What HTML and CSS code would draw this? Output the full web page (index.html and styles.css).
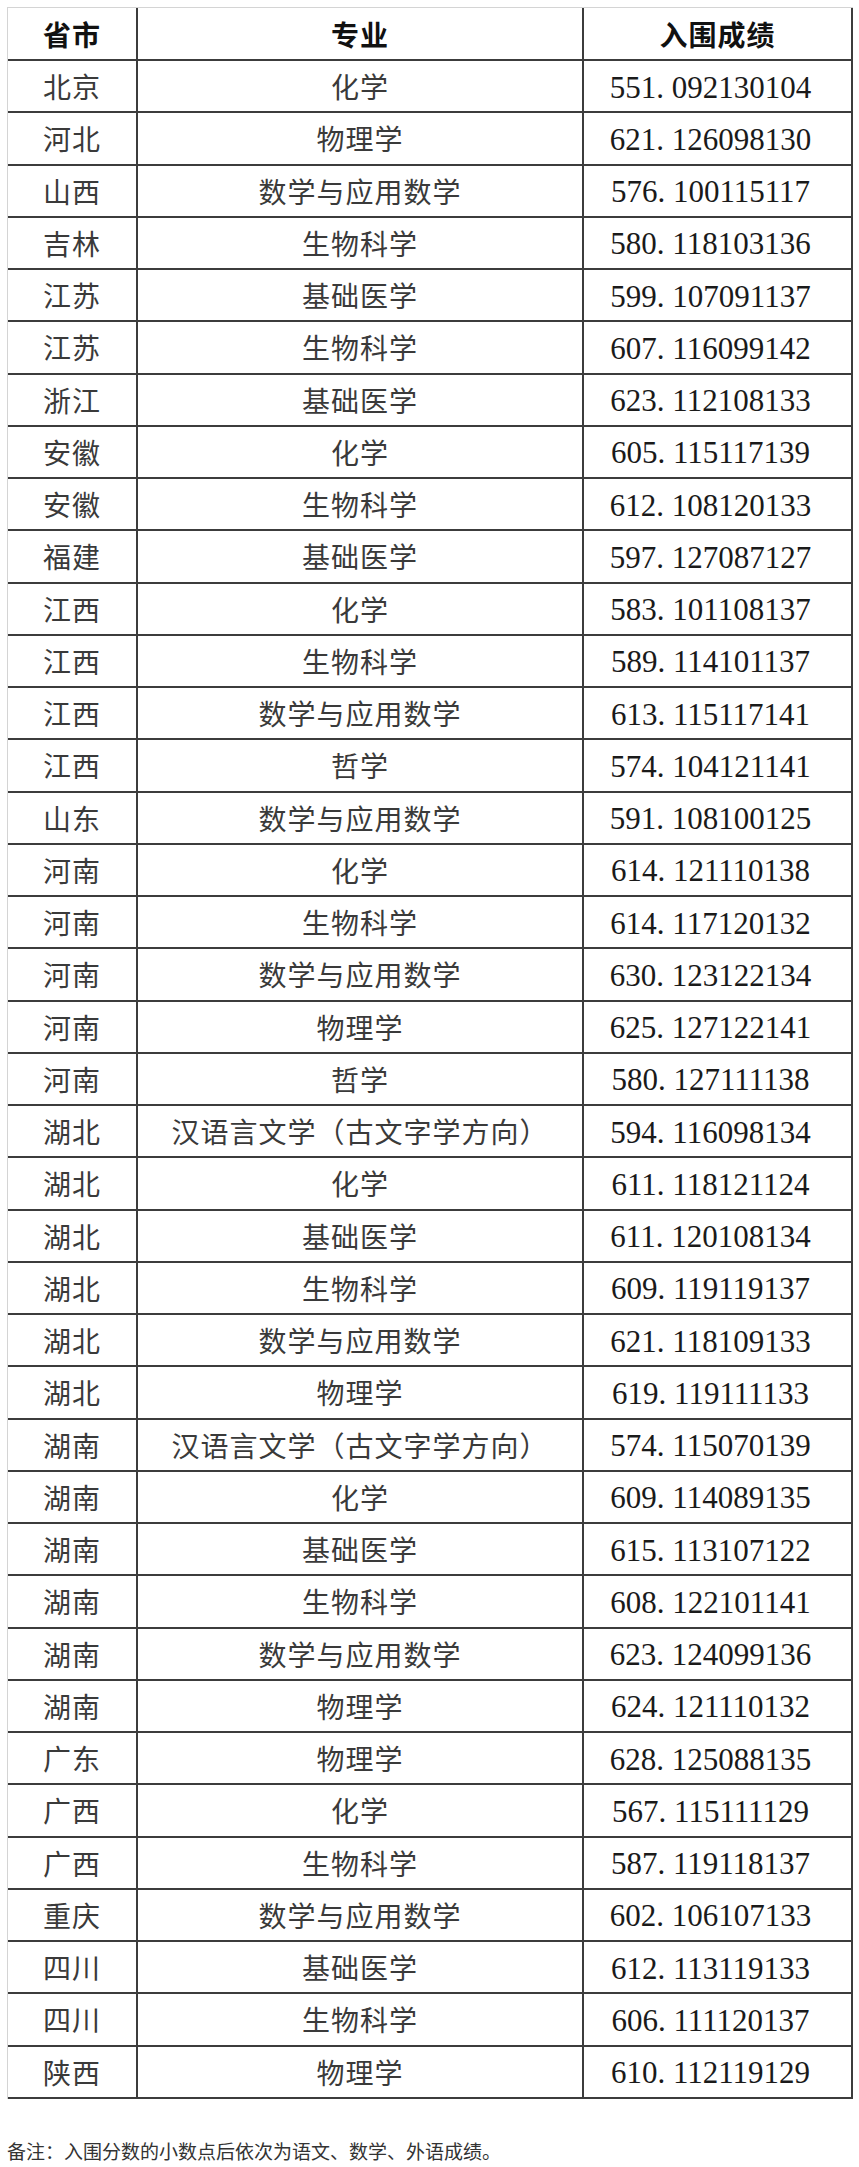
FILE: index.html
```html
<!DOCTYPE html>
<html lang="zh-CN">
<head>
<meta charset="utf-8">
<title>入围成绩</title>
<link rel="stylesheet" href="styles.css">
</head>
<body>
<div class="sheet">
  <div class="grid">
    <div class="c h">省市</div><div class="c h">专业</div><div class="c h">入围成绩</div>
    <div class="c">北京</div><div class="c">化学</div><div class="c n">551<span class="pt">.</span>092130104</div>
    <div class="c">河北</div><div class="c">物理学</div><div class="c n">621<span class="pt">.</span>126098130</div>
    <div class="c">山西</div><div class="c">数学与应用数学</div><div class="c n">576<span class="pt">.</span>100115117</div>
    <div class="c">吉林</div><div class="c">生物科学</div><div class="c n">580<span class="pt">.</span>118103136</div>
    <div class="c">江苏</div><div class="c">基础医学</div><div class="c n">599<span class="pt">.</span>107091137</div>
    <div class="c">江苏</div><div class="c">生物科学</div><div class="c n">607<span class="pt">.</span>116099142</div>
    <div class="c">浙江</div><div class="c">基础医学</div><div class="c n">623<span class="pt">.</span>112108133</div>
    <div class="c">安徽</div><div class="c">化学</div><div class="c n">605<span class="pt">.</span>115117139</div>
    <div class="c">安徽</div><div class="c">生物科学</div><div class="c n">612<span class="pt">.</span>108120133</div>
    <div class="c">福建</div><div class="c">基础医学</div><div class="c n">597<span class="pt">.</span>127087127</div>
    <div class="c">江西</div><div class="c">化学</div><div class="c n">583<span class="pt">.</span>101108137</div>
    <div class="c">江西</div><div class="c">生物科学</div><div class="c n">589<span class="pt">.</span>114101137</div>
    <div class="c">江西</div><div class="c">数学与应用数学</div><div class="c n">613<span class="pt">.</span>115117141</div>
    <div class="c">江西</div><div class="c">哲学</div><div class="c n">574<span class="pt">.</span>104121141</div>
    <div class="c">山东</div><div class="c">数学与应用数学</div><div class="c n">591<span class="pt">.</span>108100125</div>
    <div class="c">河南</div><div class="c">化学</div><div class="c n">614<span class="pt">.</span>121110138</div>
    <div class="c">河南</div><div class="c">生物科学</div><div class="c n">614<span class="pt">.</span>117120132</div>
    <div class="c">河南</div><div class="c">数学与应用数学</div><div class="c n">630<span class="pt">.</span>123122134</div>
    <div class="c">河南</div><div class="c">物理学</div><div class="c n">625<span class="pt">.</span>127122141</div>
    <div class="c">河南</div><div class="c">哲学</div><div class="c n">580<span class="pt">.</span>127111138</div>
    <div class="c">湖北</div><div class="c">汉语言文学（古文字学方向）</div><div class="c n">594<span class="pt">.</span>116098134</div>
    <div class="c">湖北</div><div class="c">化学</div><div class="c n">611<span class="pt">.</span>118121124</div>
    <div class="c">湖北</div><div class="c">基础医学</div><div class="c n">611<span class="pt">.</span>120108134</div>
    <div class="c">湖北</div><div class="c">生物科学</div><div class="c n">609<span class="pt">.</span>119119137</div>
    <div class="c">湖北</div><div class="c">数学与应用数学</div><div class="c n">621<span class="pt">.</span>118109133</div>
    <div class="c">湖北</div><div class="c">物理学</div><div class="c n">619<span class="pt">.</span>119111133</div>
    <div class="c">湖南</div><div class="c">汉语言文学（古文字学方向）</div><div class="c n">574<span class="pt">.</span>115070139</div>
    <div class="c">湖南</div><div class="c">化学</div><div class="c n">609<span class="pt">.</span>114089135</div>
    <div class="c">湖南</div><div class="c">基础医学</div><div class="c n">615<span class="pt">.</span>113107122</div>
    <div class="c">湖南</div><div class="c">生物科学</div><div class="c n">608<span class="pt">.</span>122101141</div>
    <div class="c">湖南</div><div class="c">数学与应用数学</div><div class="c n">623<span class="pt">.</span>124099136</div>
    <div class="c">湖南</div><div class="c">物理学</div><div class="c n">624<span class="pt">.</span>121110132</div>
    <div class="c">广东</div><div class="c">物理学</div><div class="c n">628<span class="pt">.</span>125088135</div>
    <div class="c">广西</div><div class="c">化学</div><div class="c n">567<span class="pt">.</span>115111129</div>
    <div class="c">广西</div><div class="c">生物科学</div><div class="c n">587<span class="pt">.</span>119118137</div>
    <div class="c">重庆</div><div class="c">数学与应用数学</div><div class="c n">602<span class="pt">.</span>106107133</div>
    <div class="c">四川</div><div class="c">基础医学</div><div class="c n">612<span class="pt">.</span>113119133</div>
    <div class="c">四川</div><div class="c">生物科学</div><div class="c n">606<span class="pt">.</span>111120137</div>
    <div class="c">陕西</div><div class="c">物理学</div><div class="c n">610<span class="pt">.</span>112119129</div>
  </div>
  <p class="note">备注：入围分数的小数点后依次为语文、数学、外语成绩。</p>
</div>
</body>
</html>
```

FILE: styles.css
```css
html, body {
  margin: 0;
  padding: 0;
  background: #fff;
}

.sheet {
  padding: 7px 0 0 7px;
}

.grid {
  display: grid;
  grid-template-columns: 130px 446px 269px;
  grid-template-rows: 53px;
  grid-auto-rows: 52.26px;
  width: 845px;
  border-top: 1px solid #d4d4d4;
  border-left: 1px solid #d4d4d4;
}

.c {
  box-sizing: border-box;
  display: flex;
  align-items: center;
  justify-content: center;
  border-right: 2px solid #3c3c3c;
  border-bottom: 2px solid #3c3c3c;
  font-family: "Noto Sans CJK SC", "Noto Sans", sans-serif;
  font-size: 28px;
  font-weight: 400;
  letter-spacing: 1px;
  color: #3a3a3a;
  white-space: nowrap;
  line-height: 1;
}

.h {
  font-weight: 700;
  color: #111;
}

.n {
  font-family: "Liberation Serif", "Noto Sans CJK SC", serif;
  font-size: 31px;
  letter-spacing: 0;
  color: #1a1a1a;
  padding-right: 14px;
  padding-top: 2px;
}

.pt {
  letter-spacing: 0.25em;
}

.note {
  margin: 38px 0 0 0;
  font-family: "Noto Sans CJK SC", "Noto Sans", sans-serif;
  font-size: 19px;
  line-height: 28px;
  color: #333;
}
```
